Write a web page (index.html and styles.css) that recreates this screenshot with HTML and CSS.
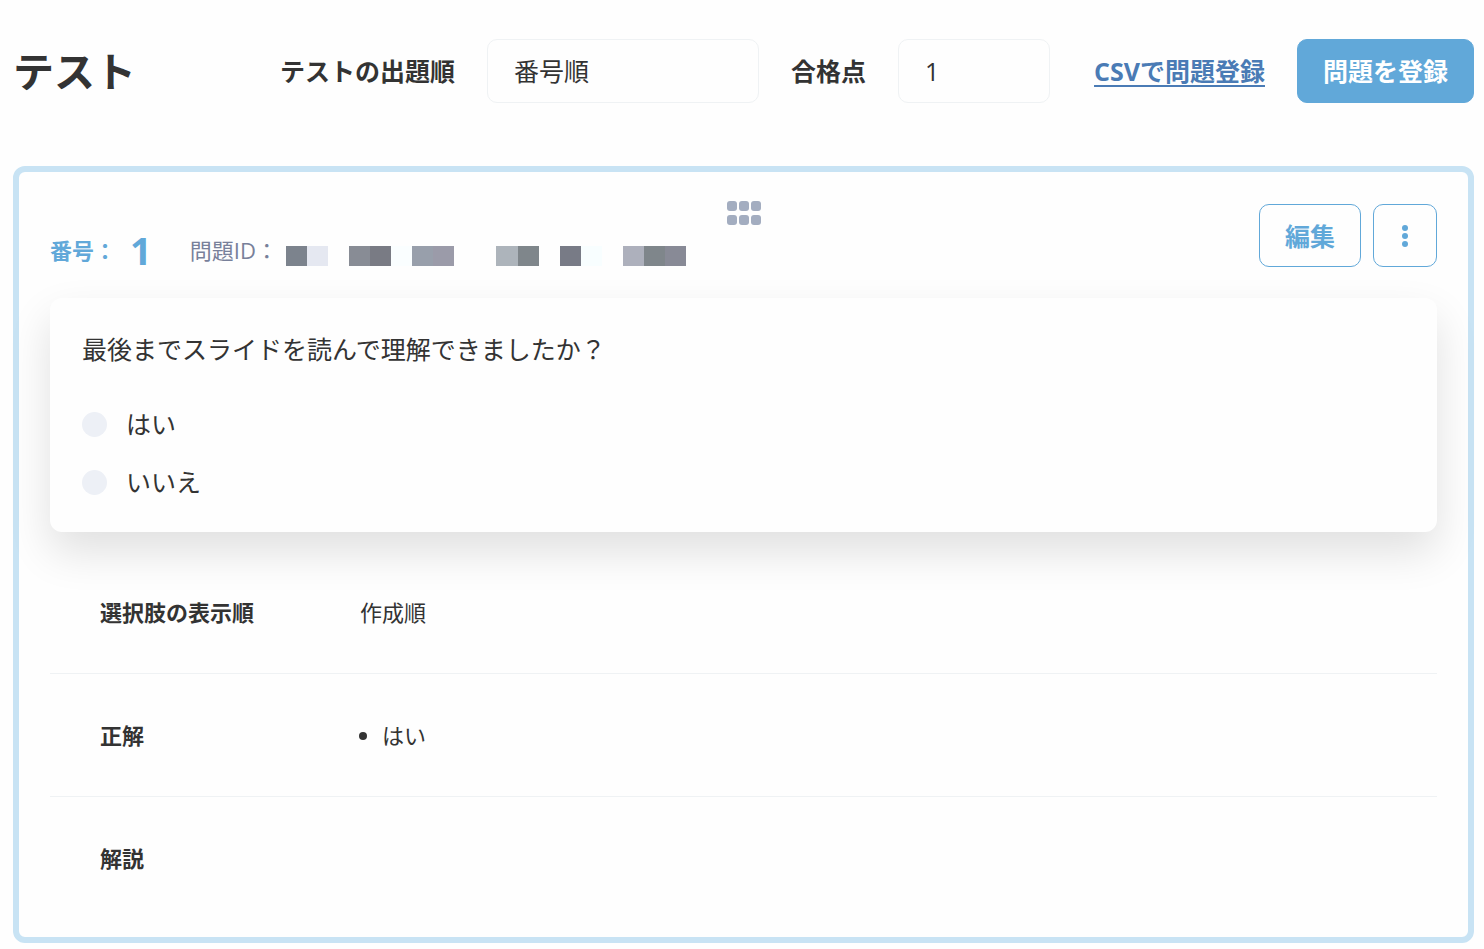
FILE: index.html
```html
<!DOCTYPE html>
<html lang="ja">
<head>
  <meta charset="UTF-8" />
  <meta name="viewport" content="width=device-width, initial-scale=1.0" />
  <title>テスト</title>
  <link rel="stylesheet" href="styles.css">
</head>
<body>
  <header class="test-header">
    <h1>テスト</h1>
    <div class="test-controls">
      <label for="order">テストの出題順</label>
      <select id="order" class="field field-order">
        <option>番号順</option>
      </select>
      <label for="score">合格点</label>
      <input id="score" class="field field-score" type="text" inputmode="numeric" value="1">
      <a class="csv-link" href="#">CSVで問題登録</a>
      <button class="btn btn-primary" type="button">問題を登録</button>
    </div>
  </header>

  <main class="question">
    <button class="drag-handle" type="button" aria-label="並べ替え">
      <svg width="34" height="25" viewBox="0 0 34 25" fill="currentColor">
        <rect x="0" y="0" width="10" height="10" rx="3" />
        <rect x="12" y="0" width="10" height="10" rx="3" />
        <rect x="24" y="0" width="10" height="10" rx="3" />
        <rect x="0" y="14" width="10" height="10" rx="3" />
        <rect x="12" y="14" width="10" height="10" rx="3" />
        <rect x="24" y="14" width="10" height="10" rx="3" />
      </svg>
    </button>

    <div class="question-head">
      <div class="question-meta">
        <span class="number-label">番号：</span>
        <span class="number">1</span>
        <span class="question-id">問題ID：</span>
        <!-- masked id -->
        <svg class="id-mask" width="400" height="20" viewBox="0 0 400 20" shape-rendering="crispEdges" aria-hidden="true">
          <rect x="0" width="21" height="20" fill="#7c838d" />
          <rect x="21" width="21" height="20" fill="#e5e8f1" />
          <rect x="63" width="21" height="20" fill="#888c95" />
          <rect x="84" width="21" height="20" fill="#797b84" />
          <rect x="105" width="21" height="20" fill="#fafeff" />
          <rect x="126" width="21" height="20" fill="#989fab" />
          <rect x="147" width="21" height="20" fill="#9b9ba9" />
          <rect x="210" width="22" height="20" fill="#adb4bb" />
          <rect x="232" width="21" height="20" fill="#7f868b" />
          <rect x="274" width="21" height="20" fill="#787b86" />
          <rect x="295" width="21" height="20" fill="#f8feff" />
          <rect x="337" width="21" height="20" fill="#adb0bc" />
          <rect x="358" width="21" height="20" fill="#7f868b" />
          <rect x="379" width="21" height="20" fill="#888a96" />
        </svg>
      </div>
      <div class="question-actions">
        <button class="btn btn-outline" type="button">編集</button>
        <button class="btn btn-outline btn-menu" type="button" aria-label="メニュー">
          <svg width="6" height="22" viewBox="0 0 6 22" fill="currentColor">
            <circle cx="3" cy="3" r="3" />
            <circle cx="3" cy="11" r="3" />
            <circle cx="3" cy="19" r="3" />
          </svg>
        </button>
      </div>
    </div>

    <section class="preview">
      <p>最後までスライドを読んで理解できましたか？</p>
      <div class="choices">
        <label class="choice"><input type="radio" name="answer">はい</label>
        <label class="choice"><input type="radio" name="answer">いいえ</label>
      </div>
    </section>

    <dl class="details">
      <div class="detail-row">
        <dt>選択肢の表示順</dt>
        <dd>作成順</dd>
      </div>
      <div class="detail-row">
        <dt>正解</dt>
        <dd>
          <ul>
            <li>はい</li>
          </ul>
        </dd>
      </div>
      <div class="detail-row">
        <dt>解説</dt>
        <dd></dd>
      </div>
    </dl>
  </main>
</body>
</html>
```

FILE: styles.css
```css
:root {
  --primary: #61a8d9;
  --primary-light: #c8e3f4;
  --link: #4a7bb5;
  --text: #333333;
  --muted: #78809a;
  --handle: #a3adc0;
  --line: #eff2f4;
  --bg: #fefefe;
}

* {
  margin: 0;
  padding: 0;
  box-sizing: border-box;
}

body {
  font-family: "Open Sans", "Noto Sans CJK JP", sans-serif;
  font-size: 25px;
  line-height: 38px;
  color: var(--text);
  background: var(--bg);
  padding: 39px 10px 6px 13px;
}

button,
input,
select {
  font: inherit;
  color: inherit;
}

/* Header */
.test-header {
  display: flex;
  align-items: center;
  justify-content: space-between;
  margin-bottom: 63px;
}

.test-header h1 {
  font-size: 41px;
  font-weight: 700;
  white-space: nowrap;
}

.test-controls {
  display: flex;
  align-items: center;
  gap: 32px;
  font-weight: 700;
  white-space: nowrap;
}

.field {
  height: 64px;
  padding: 0 26px;
  font-weight: 400;
  background: var(--bg);
  border: 1px solid var(--line);
  border-radius: 10px;
  appearance: none;
}

.field-order {
  width: 272px;
}

.field-score {
  width: 152px;
}

.csv-link {
  margin-left: 12px;
  color: var(--link);
  text-underline-offset: 4px;
  text-decoration-thickness: 2px;
  text-decoration-skip-ink: none;
}

.btn {
  height: 64px;
  padding: 0 25px;
  font-weight: 700;
  border: 1px solid var(--primary);
  border-radius: 10px;
  cursor: pointer;
}

.btn-primary {
  color: #fff;
  background: var(--primary);
}

.btn-outline {
  height: 63px;
  color: var(--primary);
  background: var(--bg);
}

.btn-menu {
  display: flex;
  align-items: center;
  justify-content: center;
  width: 64px;
  padding: 0;
}

/* Question card */
.question {
  position: relative;
  padding: 32px 31px 18px;
  border: 6px solid var(--primary-light);
  border-radius: 12px;
}

.drag-handle {
  position: absolute;
  top: 29px;
  left: 50%;
  transform: translateX(-50%);
  display: flex;
  color: var(--handle);
  background: none;
  border: none;
  cursor: grab;
}

.question-head {
  display: flex;
  align-items: flex-end;
  justify-content: space-between;
  margin-bottom: 31px;
}

.question-meta {
  display: flex;
  align-items: center;
  font-size: 22px;
  line-height: 34px;
  white-space: nowrap;
}

.number-label,
.number {
  font-weight: 700;
  color: var(--primary);
}

.number {
  margin: 0 38px 0 14px;
  font-size: 38px;
}

.question-id {
  margin-right: 8px;
  color: var(--muted);
}

.id-mask {
  margin-top: 12px;
}

.question-actions {
  display: flex;
  gap: 12px;
}

.preview {
  padding: 32px 32px 31px;
  background: var(--bg);
  border-radius: 12px;
  box-shadow: 0 20px 44px rgba(0, 0, 0, 0.12);
}

.choices {
  display: flex;
  flex-direction: column;
  gap: 20px;
  margin-top: 37px;
}

.choice {
  display: flex;
  align-items: center;
  gap: 19px;
}

.choice input {
  width: 25px;
  height: 25px;
  background: #edf0f6;
  border-radius: 50%;
  appearance: none;
}

.choice input:checked {
  background: var(--primary);
}

/* Details */
.details {
  margin-top: 19px;
  font-size: 22px;
  line-height: 34px;
}

.detail-row {
  display: flex;
  padding: 44px 50px;
}

.detail-row + .detail-row {
  border-top: 1px solid var(--line);
}

.detail-row dt {
  width: 260px;
  font-weight: 700;
}

.detail-row ul {
  padding-left: 22px;
}
```
